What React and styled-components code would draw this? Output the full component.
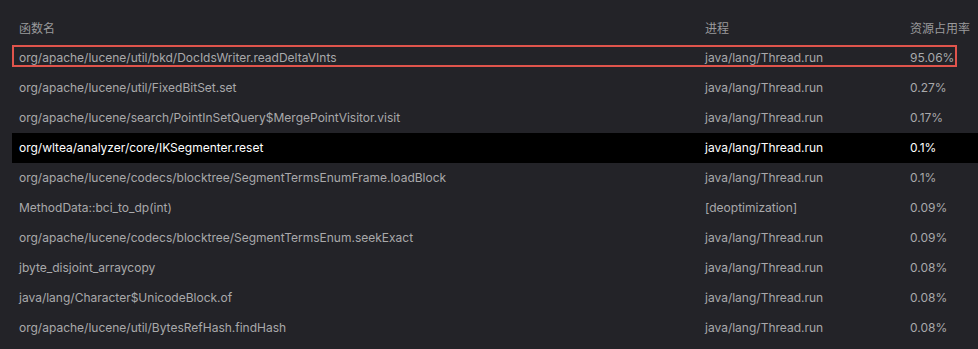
import React from 'react';
import styled, { createGlobalStyle } from 'styled-components';

const rows = [
  { fn: 'org/apache/lucene/util/bkd/DocIdsWriter.readDeltaVInts', proc: 'java/lang/Thread.run', rate: '95.06%', marked: true },
  { fn: 'org/apache/lucene/util/FixedBitSet.set', proc: 'java/lang/Thread.run', rate: '0.27%' },
  { fn: 'org/apache/lucene/search/PointInSetQuery$MergePointVisitor.visit', proc: 'java/lang/Thread.run', rate: '0.17%' },
  { fn: 'org/wltea/analyzer/core/IKSegmenter.reset', proc: 'java/lang/Thread.run', rate: '0.1%', active: true },
  { fn: 'org/apache/lucene/codecs/blocktree/SegmentTermsEnumFrame.loadBlock', proc: 'java/lang/Thread.run', rate: '0.1%' },
  { fn: 'MethodData::bci_to_dp(int)', proc: '[deoptimization]', rate: '0.09%' },
  { fn: 'org/apache/lucene/codecs/blocktree/SegmentTermsEnum.seekExact', proc: 'java/lang/Thread.run', rate: '0.09%' },
  { fn: 'jbyte_disjoint_arraycopy', proc: 'java/lang/Thread.run', rate: '0.08%' },
  { fn: 'java/lang/Character$UnicodeBlock.of', proc: 'java/lang/Thread.run', rate: '0.08%' },
  { fn: 'org/apache/lucene/util/BytesRefHash.findHash', proc: 'java/lang/Thread.run', rate: '0.08%' },
];

function App() {
  return (
    <>
      <Global />
      <Table>
        <Head>
          <Cell>函数名</Cell>
          <Cell>进程</Cell>
          <Cell>资源占用率</Cell>
        </Head>
        {rows.map((r, i) => (
          <Row key={i} $active={r.active} $marked={r.marked}>
            <Cell>{r.fn}</Cell>
            <Cell>{r.proc}</Cell>
            <Cell>{r.rate}</Cell>
          </Row>
        ))}
      </Table>
    </>
  );
}

export default App;

const Global = createGlobalStyle`
  html, body {
    margin: 0;
    background: #232328;
  }
  body {
    font-family: Inter, "Noto Sans CJK SC", sans-serif;
  }
`;

const Table = styled.div`
  width: 978px;
  height: 349px;
  box-sizing: border-box;
  padding: 13px 0 0 12px;
  background: #232328;
  overflow: hidden;
`;

const Head = styled.div`
  display: grid;
  grid-template-columns: 686px 205px 1fr;
  height: 30px;
  box-sizing: border-box;
  padding-bottom: 1px;
  align-items: center;
  color: #9a9a9c;
  font-size: 12px;
  font-family: "Noto Sans CJK SC", sans-serif;
`;

const Row = styled.div`
  position: relative;
  display: grid;
  grid-template-columns: 686px 205px 1fr;
  height: 30px;
  box-sizing: border-box;
  padding-bottom: 2px;
  align-items: center;
  font-size: 12px;
  color: ${p => (p.$active ? '#ffffff' : '#a9a9ab')};
  background: ${p => (p.$active ? '#000000' : 'transparent')};

  &::after {
    content: '';
    display: ${p => (p.$marked ? 'block' : 'none')};
    position: absolute;
    left: 0;
    top: 2px;
    width: 945px;
    height: 22px;
    box-sizing: border-box;
    border: 2px solid #e0544c;
  }
`;

const Cell = styled.div`
  padding-left: 7px;
  white-space: nowrap;
`;
